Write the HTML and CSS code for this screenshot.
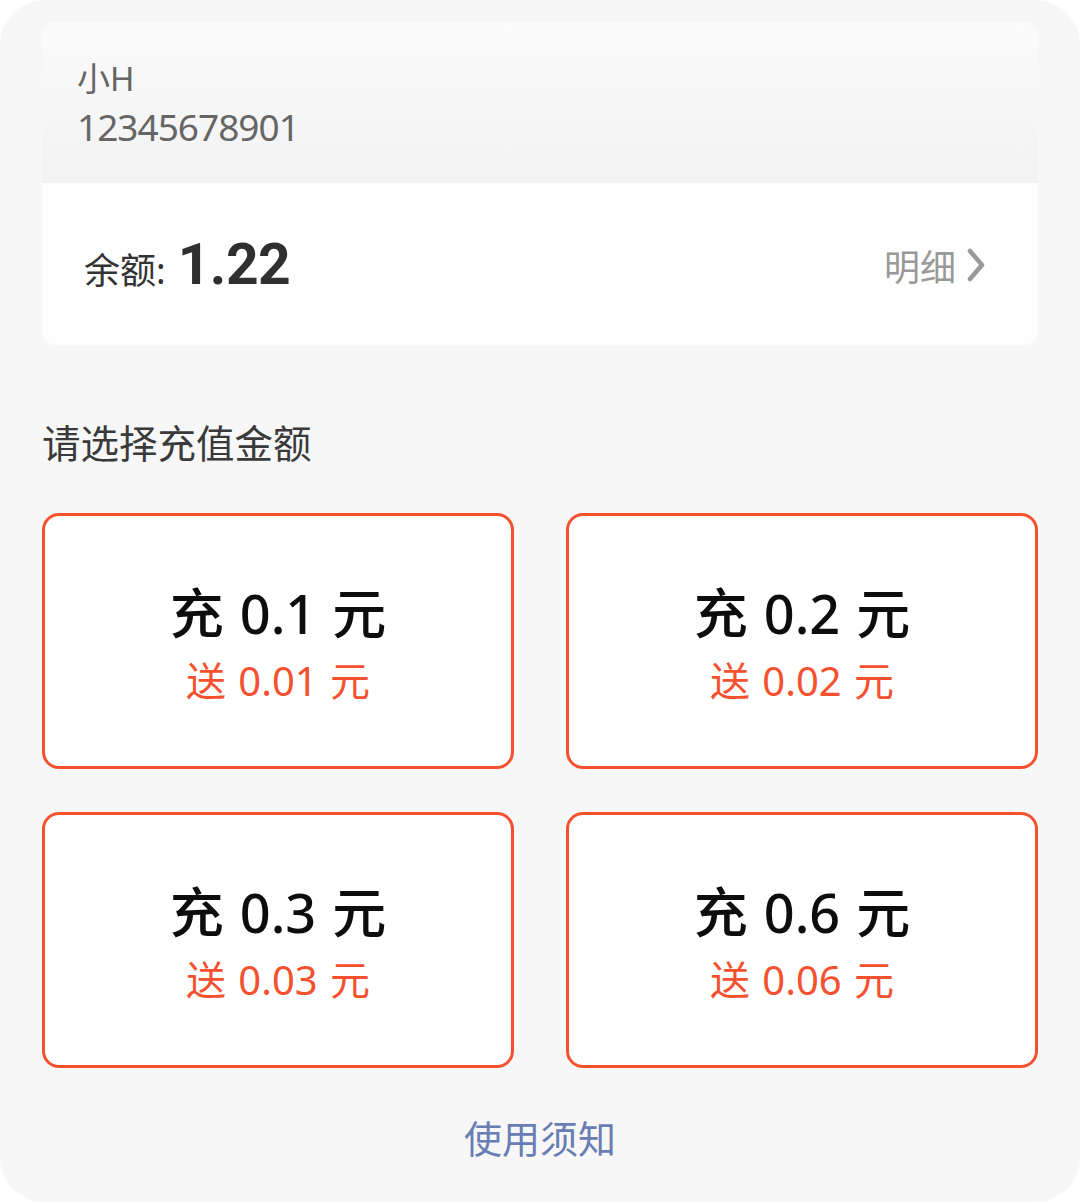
FILE: index.html
```html
<!DOCTYPE html>
<html lang="zh-CN">
<head>
<meta charset="utf-8">
<title>充值</title>
<link rel="stylesheet" href="styles.css">
</head>
<body>
<div class="page">
  <div class="card">
    <div class="card-head">
      <div class="user-name">小H</div>
      <div class="user-phone">12345678901</div>
    </div>
    <div class="card-balance">
      <div class="balance">
        <span class="balance-label">余额:</span>
        <span class="balance-value">1.22</span>
      </div>
      <div class="detail">
        <span class="detail-text">明细</span>
        <svg class="chevron" width="20" height="36" viewBox="0 0 20 36"><polyline points="4,4 16,18 4,32" fill="none" stroke="#999999" stroke-width="4.5" stroke-linecap="round" stroke-linejoin="round"/></svg>
      </div>
    </div>
  </div>

  <div class="section-title">请选择充值金额</div>

  <div class="options">
    <div class="option">
      <div class="opt-main">充 0.1 元</div>
      <div class="opt-gift">送 0.01 元</div>
    </div>
    <div class="option">
      <div class="opt-main">充 0.2 元</div>
      <div class="opt-gift">送 0.02 元</div>
    </div>
    <div class="option">
      <div class="opt-main">充 0.3 元</div>
      <div class="opt-gift">送 0.03 元</div>
    </div>
    <div class="option">
      <div class="opt-main">充 0.6 元</div>
      <div class="opt-gift">送 0.06 元</div>
    </div>
  </div>

  <div class="notice">使用须知</div>
</div>
</body>
</html>
```

FILE: styles.css
```css
html, body {
  margin: 0;
  padding: 0;
  background: #ffffff;
}

body {
  font-family: "Noto Sans", "Noto Sans CJK SC", sans-serif;
}

.page {
  box-sizing: border-box;
  width: 1080px;
  height: 1202px;
  background: #f7f7f7;
  border-radius: 45px;
  padding: 22px 42px 0;
  overflow: hidden;
}

.card {
  background: #fefefe;
  border-radius: 13px;
  overflow: hidden;
}

.card-head {
  box-sizing: border-box;
  height: 161px;
  padding-left: 35px;
  display: flex;
  flex-direction: column;
  justify-content: center;
  background: linear-gradient(to bottom, #fbfbfb 0%, #f6f6f6 60%, #f2f2f2 100%);
  color: #666666;
}

.user-name {
  font-size: 33px;
  line-height: 48px;
}

.user-phone {
  font-size: 37px;
  line-height: 48px;
  letter-spacing: -1px;
}

.card-balance {
  box-sizing: border-box;
  height: 162px;
  padding: 0 52px 0 42px;
  display: flex;
  align-items: center;
  justify-content: space-between;
}

.balance {
  display: flex;
  align-items: baseline;
  gap: 12px;
}

.balance-label {
  font-size: 36px;
  color: #333333;
}

.balance-value {
  font-family: "Roboto", "Liberation Sans", sans-serif;
  font-weight: 700;
  font-size: 57px;
  color: #2f2f2f;
  letter-spacing: -0.5px;
}

.detail {
  display: flex;
  align-items: center;
  gap: 10px;
  padding-top: 2px;
}

.detail-text {
  font-size: 36px;
  color: #999999;
}

.chevron {
  display: block;
}

.section-title {
  margin-top: 72px;
  font-size: 38.5px;
  line-height: 52px;
  color: #3a3a3a;
}

.options {
  margin-top: 44px;
  display: grid;
  grid-template-columns: 1fr 1fr;
  column-gap: 52px;
  row-gap: 43px;
}

.option {
  box-sizing: border-box;
  height: 256px;
  background: #ffffff;
  border: 3px solid #f5512f;
  border-radius: 17px;
  display: flex;
  flex-direction: column;
  align-items: center;
  justify-content: center;
  padding-top: 6px;
}

.opt-main {
  font-size: 54px;
  line-height: 64px;
  font-weight: 500;
  color: #0d0d0d;
  white-space: pre;
  word-spacing: 2px;
}

.opt-gift {
  margin-top: 10px;
  font-size: 40px;
  line-height: 52px;
  color: #f5512f;
  white-space: pre;
  word-spacing: 2px;
}

.notice {
  margin-top: 44px;
  text-align: center;
  font-size: 38px;
  line-height: 52px;
  color: #6a7db4;
}
```
